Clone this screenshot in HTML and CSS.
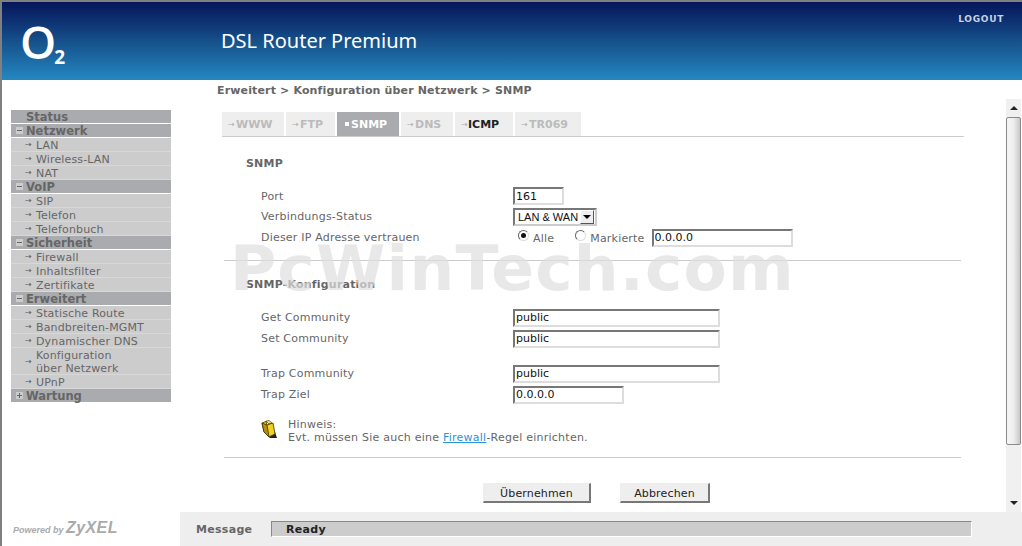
FILE: index.html
```html
<!DOCTYPE html>
<html>
<head>
    <meta charset="UTF-8">
    <title>DSL Router Premium</title>
    <link rel="stylesheet" href="styles.css">
</head>
<body>
<div class="page">
    <div class="header">
        <div class="logo">O<span class="logo-sub">2</span></div>
        <div class="product">DSL Router Premium</div>
        <a class="logout">LOGOUT</a>
    </div>
    <div class="middle">
        <div class="side">
            <div class="menu-head no-box">Status</div>
            <div class="menu-head open">Netzwerk</div>
            <div class="menu-item">LAN</div>
            <div class="menu-item">Wireless-LAN</div>
            <div class="menu-item">NAT</div>
            <div class="menu-head open">VoIP</div>
            <div class="menu-item">SIP</div>
            <div class="menu-item">Telefon</div>
            <div class="menu-item">Telefonbuch</div>
            <div class="menu-head open">Sicherheit</div>
            <div class="menu-item">Firewall</div>
            <div class="menu-item">Inhaltsfilter</div>
            <div class="menu-item">Zertifikate</div>
            <div class="menu-head open">Erweitert</div>
            <div class="menu-item">Statische Route</div>
            <div class="menu-item">Bandbreiten-MGMT</div>
            <div class="menu-item">Dynamischer DNS</div>
            <div class="menu-item">Konfiguration<br>über Netzwerk</div>
            <div class="menu-item">UPnP</div>
            <div class="menu-head closed">Wartung</div>
        </div>
        <div class="main">
            <div class="crumb">Erweitert &gt; Konfiguration über Netzwerk &gt; SNMP</div>
            <div class="pane">
                <div class="content">
                    <div class="tabs">
                        <div class="tab tab-www">WWW</div>
                        <div class="tab tab-ftp">FTP</div>
                        <div class="tab tab-snmp active">SNMP</div>
                        <div class="tab tab-dns">DNS</div>
                        <div class="tab tab-icmp hover">ICMP</div>
                        <div class="tab tab-tr">TR069</div>
                    </div>
                    <h3 class="heading first">SNMP</h3>
                    <div class="row short">
                        <label>Port</label>
                        <input class="field port" type="text" value="161">
                    </div>
                    <div class="row">
                        <label>Verbindungs-Status</label>
                        <div class="select-box">
                            <select><option>LAN &amp; WAN</option></select>
                            <span class="select-arrow"></span>
                        </div>
                    </div>
                    <div class="row">
                        <label>Dieser IP Adresse vertrauen</label>
                        <div class="trust">
                            <input class="radio" type="radio" name="trust" checked>
                            <span class="radio-text alle">Alle</span>
                            <input class="radio second" type="radio" name="trust">
                            <span class="radio-text">Markierte</span>
                            <input class="field ip" type="text" value="0.0.0.0">
                        </div>
                    </div>
                    <div class="line line-a"></div>
                    <h3 class="heading">SNMP-Konfiguration</h3>
                    <div class="row community">
                        <label>Get Community</label>
                        <input class="field wide" type="text" value="public">
                    </div>
                    <div class="row">
                        <label>Set Community</label>
                        <input class="field wide" type="text" value="public">
                    </div>
                    <div class="row trap">
                        <label>Trap Community</label>
                        <input class="field wide" type="text" value="public">
                    </div>
                    <div class="row">
                        <label>Trap Ziel</label>
                        <input class="field target" type="text" value="0.0.0.0">
                    </div>
                    <div class="note">
                        <svg class="note-icon" width="17" height="19" viewBox="0 0 17 19">
                            <path d="M5 14 L9 18 L16 18 L14 12 Z" fill="#222"/>
                            <path d="M5 1 L8 0.5 L11 3 L8 4 Z" fill="#f6e87a" stroke="#4a4000" stroke-width="0.7"/>
                            <path d="M1 3 L5 1.5 L6 5 L12 3 L14 14 L8 17 L3 12 Z" fill="#f0d020" stroke="#3a3000" stroke-width="0.8"/>
                            <path d="M1 3 L6 5 L8 17 L3 12 Z" fill="#b89010" stroke="#3a3000" stroke-width="0.8"/>
                        </svg>
                        <p>Hinweis:<br>Evt. müssen Sie auch eine <a href="#">Firewall</a>-Regel einrichten.</p>
                    </div>
                    <div class="line line-b"></div>
                    <div class="buttons">
                        <button class="btn apply">Übernehmen</button>
                        <button class="btn cancel">Abbrechen</button>
                    </div>
                </div>
                <div class="scrollbar">
                    <div class="scroll-btn"><span class="arrow-up"></span></div>
                    <div class="scroll-thumb"></div>
                    <div class="scroll-track"></div>
                    <div class="scroll-btn"><span class="arrow-down"></span></div>
                </div>
                <div class="watermark">PcWinTech.com</div>
            </div>
        </div>
    </div>
    <div class="footer">
        <div class="powered">Powered by <span class="zyxel">ZyXEL</span></div>
        <div class="message">
            <span class="message-label">Message</span>
            <div class="message-box">Ready</div>
        </div>
    </div>
</div>
</body>
</html>
```

FILE: styles.css
```css
* {
    box-sizing: border-box;
}
html, body {
    margin: 0;
    padding: 0;
    background-color: #fff;
    overflow: hidden;
}
body {
    font-family: "DejaVu Sans", Verdana, sans-serif;
    font-size: 11px;
    color: #666;
}
.page {
    display: flex;
    flex-direction: column;
    width: 1022px;
    height: 546px;
    border-top: 2px solid #808080;
    border-left: 2px solid #808080;
    overflow: hidden;
}

/* header */
.header {
    display: flex;
    flex: none;
    height: 78px;
    color: #fff;
    background: linear-gradient(#06165a, #0d3272 25%, #17568f 55%, #2487c2);
}
.logo {
    width: 219px;
    padding: 8px 0 0 18px;
    font-family: "Open Sans", sans-serif;
    font-size: 46px;
    font-weight: 600;
    line-height: 62px;
    flex: none;
}
.logo-sub {
    margin-left: -2px;
    font-size: 19px;
    font-weight: 700;
    line-height: 18px;
    vertical-align: -5px;
}
.product {
    padding-top: 26px;
    font-family: "Noto Sans", sans-serif;
    font-size: 20px;
    line-height: 25px;
}
.logout {
    margin-left: auto;
    padding: 12px 18px 0 0;
    font-size: 9px;
    font-weight: bold;
    letter-spacing: 0.7px;
    line-height: 11px;
    color: #c8d2e2;
}

/* left menu */
.middle {
    display: flex;
    flex: none;
    height: 432px;
}
.side {
    width: 169px;
    flex: none;
    padding: 30px 0 0 9px;
}
.menu-head {
    position: relative;
    height: 14px;
    padding: 1px 0 0 15px;
    font-weight: bold;
    font-size: 11.5px;
    line-height: 13px;
    color: #666;
    background-color: #a9abae;
    border-bottom: 1px solid #fff;
}
.menu-head.open::before,
.menu-head.closed::before {
    content: "";
    position: absolute;
    left: 5px;
    top: 3px;
    width: 7px;
    height: 7px;
    background-color: #ccc;
    background-image: linear-gradient(#666, #666);
    background-size: 5px 1px;
    background-position: center;
    background-repeat: no-repeat;
}
.menu-head.closed::before {
    background-image: linear-gradient(#666, #666), linear-gradient(#666, #666);
    background-size: 5px 1px, 1px 5px;
}
.menu-item {
    position: relative;
    padding: 1px 0 0 25px;
    line-height: 13px;
    background-color: #ccc;
    box-shadow: inset 0 -1px 0 #d8d8d8;
    letter-spacing: 0.15px;
}
.menu-item::before {
    content: "→";
    position: absolute;
    left: 14px;
    top: 50%;
    margin-top: -7px;
    font-size: 8px;
    line-height: 13px;
    color: #555;
}

/* main area */
.main {
    flex: 1;
    min-width: 0;
}
.crumb {
    height: 19px;
    padding: 4px 0 0 46px;
    font-weight: bold;
    font-size: 11px;
    line-height: 14px;
    letter-spacing: 0.15px;
}
.pane {
    position: relative;
    display: flex;
    height: 413px;
    padding-left: 51px;
    overflow: hidden;
}
.content {
    width: 742px;
    flex: none;
}
.tabs {
    display: flex;
    margin-top: 13px;
    height: 25px;
    border-bottom: 1px solid #ccc;
}
.tab {
    height: 24px;
    padding: 1px 0 0 14px;
    margin-right: 2px;
    position: relative;
    font-weight: bold;
    font-size: 11px;
    line-height: 24px;
    color: #bbb;
    background-color: #eee;
}
.tab::before {
    content: "→";
    position: absolute;
    left: 6px;
    font-size: 8px;
    font-weight: normal;
    color: #aaa;
}
.tab-www { width: 62px; }
.tab-ftp { width: 49px; }
.tab-snmp { width: 62px; }
.tab-dns { width: 52px; }
.tab-icmp { width: 58px; padding-left: 13px; }
.tab-tr { width: 66px; }
.tab.active {
    color: #fff;
    background-color: #a9abae;
}
.tab.active::before {
    content: "";
    top: 10px;
    left: 8px;
    width: 4px;
    height: 4px;
    background-color: #fff;
}
.tab.hover {
    color: #222;
}
.heading {
    margin: 17px 0 15px 24px;
    font-size: 11px;
    font-weight: bold;
    line-height: 14px;
    letter-spacing: 0.2px;
    color: #666;
}
.heading.first {
    margin-top: 20px;
}
.row {
    display: flex;
    align-items: center;
    height: 21px;
    padding-left: 39px;
}
.row.short {
    height: 20px;
}
.row.trap {
    margin-top: 14px;
}
.row label {
    width: 252px;
    flex: none;
    letter-spacing: 0.2px;
}

/* form controls */
.field {
    height: 18px;
    padding: 0 1px;
    font-family: "DejaVu Sans", sans-serif;
    font-size: 11px;
    color: #111;
    background-color: #fff;
    border: 2px solid;
    border-color: #777 #ddd #ddd #777;
    border-radius: 0;
    outline: none;
}
.port { width: 51px; }
.wide { width: 207px; }
.target { width: 111px; }
.select-box {
    display: flex;
    align-items: center;
    justify-content: space-between;
    width: 84px;
    height: 18px;
    padding-right: 1px;
    background-color: #fff;
    border: 2px solid;
    border-color: #777 #ccc #ccc #777;
}
.select-box select {
    width: 66px;
    padding: 0 0 0 3px;
    border: none;
    appearance: none;
    font-family: "Liberation Sans", Arial, sans-serif;
    font-size: 11px;
    color: #111;
    background: none;
}
.select-arrow {
    position: relative;
    width: 14px;
    height: 14px;
    flex: none;
    background-color: #eee;
    border: 1px solid;
    border-color: #fff #555 #555 #fff;
}
.select-arrow::after {
    content: "";
    position: absolute;
    left: 2px;
    top: 4px;
    border-style: solid;
    border-width: 4px 4px 0;
    border-color: #000 transparent transparent;
}
.trust {
    display: flex;
    align-items: center;
}
.radio {
    appearance: none;
    position: relative;
    width: 11px;
    height: 11px;
    margin: 0 0 4px 5px;
    background-color: #fff;
    border: 1px solid;
    border-color: #666 #ddd #ddd #666;
    border-radius: 50%;
}
.radio:checked::after {
    content: "";
    position: absolute;
    left: 2px;
    top: 2px;
    width: 5px;
    height: 5px;
    border-radius: 50%;
    background-color: #111;
}
.radio.second {
    margin-left: 21px;
}
.radio-text {
    margin-left: 4px;
    padding-top: 2px;
    letter-spacing: 0.2px;
}
.ip {
    width: 141px;
    margin-left: 7px;
}
.line {
    height: 1px;
    width: 737px;
    margin-left: 2px;
    background-color: #ccc;
}
.line-a {
    margin-top: 12px;
}
.note {
    display: flex;
    margin: 13px 0 13px 39px;
}
.note-icon {
    width: 17px;
    flex: none;
    margin: 2px 10px 0 0;
}
.note p {
    margin: 0;
    line-height: 13px;
    letter-spacing: 0.24px;
}
.note a {
    color: #2f94d6;
}
.buttons {
    display: flex;
    gap: 29px;
    margin: 25px 0 0 261px;
}
.btn {
    height: 20px;
    padding: 1px 0 0;
    font-family: "DejaVu Sans", sans-serif;
    font-size: 11px;
    letter-spacing: 0.15px;
    color: #222;
    background-color: #eee;
    border-style: solid;
    border-width: 1px 2px 2px 1px;
    border-color: #eee #777 #777 #eee;
    border-radius: 0;
}
.apply { width: 108px; }
.cancel { width: 90px; }

/* scrollbar */
.scrollbar {
    display: flex;
    flex-direction: column;
    width: 15px;
    margin-left: 42px;
    background-color: #f0f0f0;
    flex: none;
}
.scroll-btn {
    display: flex;
    align-items: center;
    justify-content: center;
    height: 18px;
    flex: none;
}
.arrow-up,
.arrow-down {
    border-style: solid;
    border-color: #222 transparent;
}
.arrow-up {
    border-width: 0 4px 4px;
}
.arrow-down {
    border-width: 4px 4px 0;
}
.scroll-thumb {
    height: 328px;
    flex: none;
    background: linear-gradient(90deg, #f6f6f6, #eee 50%, #c8c8c8);
    border: 1px solid #8a8a8a;
    border-radius: 2px;
}
.scroll-track {
    flex: 1;
}

/* overlay text */
.watermark {
    position: absolute;
    left: 59px;
    top: 132px;
    font-family: "DejaVu Sans", Verdana, sans-serif;
    font-size: 63px;
    font-weight: bold;
    letter-spacing: 1.2px;
    line-height: 76px;
    color: rgba(222, 222, 222, 0.7);
    white-space: nowrap;
    pointer-events: none;
}

/* footer */
.footer {
    display: flex;
    flex: 1;
}
.powered {
    width: 178px;
    flex: none;
    padding: 4px 0 0 11px;
    font-family: "Liberation Sans", Arial, sans-serif;
    font-size: 9px;
    font-style: italic;
    font-weight: bold;
    line-height: 24px;
    color: #aaa;
}
.zyxel {
    font-size: 16px;
    letter-spacing: 0.4px;
}
.message {
    display: flex;
    flex: 1;
    align-items: flex-start;
    padding: 9px 0 0 16px;
    background-color: #eee;
}
.message-label {
    width: 75px;
    padding-top: 1px;
    font-weight: bold;
    line-height: 15px;
    letter-spacing: 0.3px;
}
.message-box {
    width: 701px;
    height: 16px;
    padding: 1px 0 0 14px;
    font-weight: bold;
    line-height: 14px;
    letter-spacing: 0.3px;
    color: #222;
    background-color: #ccc;
    border: 1px solid;
    border-color: #888 #fff #fff #888;
}
```
